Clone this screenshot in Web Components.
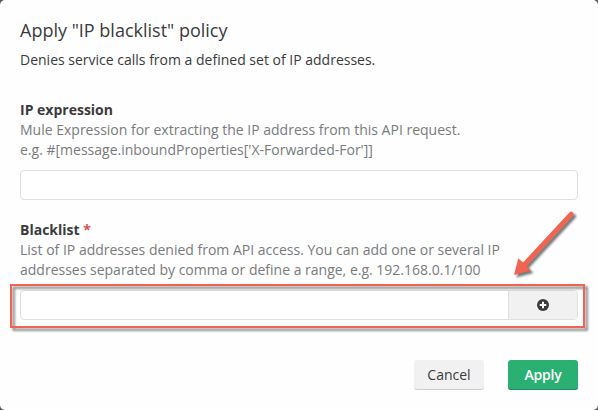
<!DOCTYPE html>
<html lang="en">
<head>
<meta charset="utf-8">
<title>Apply policy</title>
<style>
html, body { margin: 0; height: 100%; overflow: hidden; }
body { background: #555; font-family: "Open Sans", "Liberation Sans", sans-serif; font-size: 14px; line-height: 20px; color: #3a3b3c; }
</style>
</head>
<body>
<policy-dialog>
  <span slot="title">Apply "IP blacklist" policy</span>
  <span slot="summary">Denies service calls from a defined set of IP addresses.</span>
  <form-field label="IP expression">
    <span slot="help">Mule Expression for extracting the IP address from this API request.<br>e.g. #[message.inboundProperties['X-Forwarded-For']]</span>
    <text-input></text-input>
  </form-field>
  <form-field label="Blacklist" required>
    <span slot="help">List of IP addresses denied from API access. You can add one or several IP<br>addresses separated by comma or define a range, e.g. 192.168.0.1/100</span>
    <text-input addable></text-input>
    <callout-mark slot="mark"></callout-mark>
  </form-field>
  <action-button slot="actions">Cancel</action-button>
  <action-button slot="actions" primary>Apply</action-button>
</policy-dialog>
<script>
class BaseElement extends HTMLElement {
  constructor() {
    super();
    this.attachShadow({ mode: 'open' }).innerHTML = this.constructor.markup;
  }
}

customElements.define('policy-dialog', class extends BaseElement {
  static markup = `
    <style>
      :host { display: flex; flex-direction: column; box-sizing: border-box; width: 598px; height: 410px; padding: 18px 20px 0; background: #fefefe; border-radius: 5px; }
      header { display: flex; flex-direction: column; gap: 8px; height: 52px; margin-bottom: 30px; }
      h1 { margin: 0; font-size: 18px; line-height: 24px; font-weight: 400; }
      p { margin: 0; }
      main { display: flex; flex-direction: column; gap: 20px; }
      footer { display: flex; justify-content: flex-end; gap: 24px; margin-top: 40px; }
    </style>
    <header><h1><slot name="title"></slot></h1><p><slot name="summary"></slot></p></header>
    <main><slot></slot></main>
    <footer><slot name="actions"></slot></footer>`;
});

customElements.define('form-field', class extends BaseElement {
  static markup = `
    <style>
      :host { display: block; position: relative; white-space: nowrap; }
      .label { font-weight: 700; }
      .star { color: #d9534f; display: none; }
      :host([required]) .star { display: inline; }
      .help { color: #797b7d; margin-bottom: 10px; }
    </style>
    <div class="label"><span class="name"></span><span class="star"> *</span></div>
    <div class="help"><slot name="help"></slot></div>
    <slot></slot><slot name="mark"></slot>`;
  connectedCallback() {
    this.shadowRoot.querySelector('.name').textContent = this.getAttribute('label');
  }
});

customElements.define('text-input', class extends BaseElement {
  static markup = `
    <style>
      :host { display: flex; box-sizing: border-box; height: 30px; border: 1px solid #dfdfdf; border-radius: 4px; background: #fff; overflow: hidden; }
      .box { flex: 1; }
      .add { display: none; width: 68px; border-left: 1px solid #dfdfdf; background: #f1f1f1; align-items: center; justify-content: center; }
      :host([addable]) .add { display: flex; }
    </style>
    <div class="box"></div>
    <div class="add"><svg width="12" height="12" viewBox="0 0 12 12"><circle cx="6" cy="6" r="6" fill="#3a3b3c"/><path d="M6 2.7v6.6M2.7 6h6.6" stroke="#fff" stroke-width="2"/></svg></div>`;
});

customElements.define('action-button', class extends BaseElement {
  static markup = `
    <style>
      :host { display: block; box-sizing: border-box; width: 70px; height: 30px; padding-top: 5px; text-align: center; border-radius: 3px; background: #f1f1f1; box-shadow: inset 0 -1px #d0d0d0; }
      :host([primary]) { background: #2bb073; box-shadow: inset 0 -1px #22915d; color: #fff; font-weight: 600; letter-spacing: -0.2px; }
    </style>
    <slot></slot>`;
});

/* Highlight frame and arrow laid over the field they point at. */
customElements.define('callout-mark', class extends BaseElement {
  static markup = `
    <style>
      :host { position: absolute; left: -20px; top: -20px; width: 598px; height: 150px; pointer-events: none; }
      svg { display: block; overflow: visible; }
    </style>
    <svg width="598" height="150" viewBox="0 200 598 150">
      <defs>
        <filter id="soft" x="-10%" y="-20%" width="120%" height="140%" color-interpolation-filters="sRGB"><feGaussianBlur stdDeviation="0.8"/></filter>
      </defs>
      <rect x="13.700" y="287.700" width="573" height="42" fill="none" stroke="#8a8a8a" stroke-width="2.400" filter="url(#soft)"/>
      <g transform="translate(2.500 2.500)" filter="url(#soft)">
        <path d="M571.500 213.700L525 264" stroke="#777" stroke-width="4.200" stroke-linecap="round"/>
        <path d="M514 275L518.500 258.500L531 270.500Z" fill="#777"/>
      </g>
      <rect x="11" y="285" width="573" height="42" fill="none" stroke="#f26352" stroke-width="2"/>
      <path d="M571.200 214.200L525 264" stroke="#f26352" stroke-width="4.900" stroke-linecap="round"/>
      <path d="M514 275L518.300 258.300L531 270.500Z" fill="#f26352"/>
    </svg>`;
});
</script>
</body>
</html>
